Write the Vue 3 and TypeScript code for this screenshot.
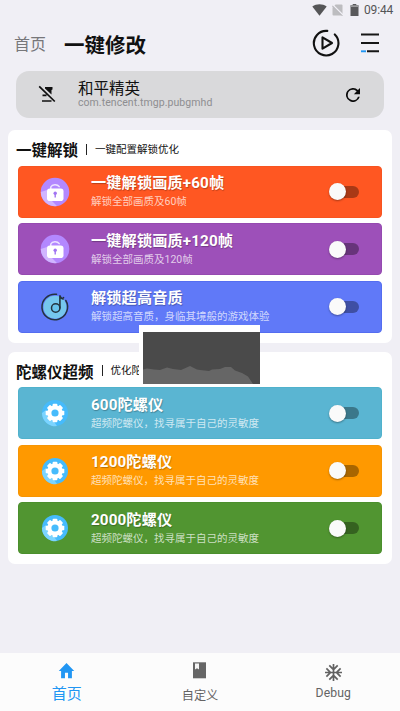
<script setup lang="ts">
import { ref } from 'vue'

type IconName = 'lock' | 'music' | 'gear'
interface Item { title: string; note: string; color: string; edge: string; icon: IconName; on: boolean }
interface Section { title: string; note: string; items: Item[] }

const gyroNote = '超频陀螺仪，找寻属于自己的灵敏度'

const sections = ref<Section[]>([
  {
    title: '一键解锁',
    note: '一键配置解锁优化',
    items: [
      { title: '一键解锁画质+60帧', note: '解锁全部画质及60帧', color: '#ff5722', edge: '#f75420', icon: 'lock', on: false },
      { title: '一键解锁画质+120帧', note: '解锁全部画质及120帧', color: '#9d50b9', edge: '#954ab0', icon: 'lock', on: false },
      { title: '解锁超高音质', note: '解锁超高音质，身临其境般的游戏体验', color: '#6079f8', edge: '#546df0', icon: 'music', on: false },
    ],
  },
  {
    title: '陀螺仪超频',
    note: '优化陀螺仪灵敏度',
    items: [
      { title: '600陀螺仪', note: gyroNote, color: '#5ab5d2', edge: '#50b2cc', icon: 'gear', on: false },
      { title: '1200陀螺仪', note: gyroNote, color: '#ff9900', edge: '#f69504', icon: 'gear', on: false },
      { title: '2000陀螺仪', note: gyroNote, color: '#519531', edge: '#4b8f2d', icon: 'gear', on: false },
    ],
  },
])

const gearTeeth = [0, 45, 90, 135, 180, 225, 270, 315]
</script>

<template>
  <div class="screen">
    <div class="status">
      <svg width="15" height="12" viewBox="0 0 15 12"><path d="M0.3 2.5C4.5-.4 10.500-.4 14.700 2.500L7.500 11.700Z" fill="#555557" /></svg>
      <svg class="sim" width="11" height="12" viewBox="0 0 11 12"><path d="M3.600.5H9.500Q10.500.5 10.500 1.500V11.500H1.500Q.5 11.500.5 10.500V3.500Z" fill="#bdbdc0" /><path d="M0 .5L11 11.500" stroke="#f0eff5" stroke-width="2" /><path d="M.2 1.700L10.200 11.700" stroke="#9a9a9c" stroke-width=".9" /></svg>
      <svg class="battery" width="9" height="12" viewBox="0 0 9 12"><path d="M2.700 0H6.300V1.300H8.500V12H.5V1.300H2.700Z" fill="#59595b" /><path d="M.5 1.300H8.500V3H.5Z" fill="#9b9b9d" /></svg>
      <span class="clock">09:44</span>
    </div>

    <header class="header">
      <span class="crumb">首页</span>
      <h1>一键修改</h1>
      <svg class="play" width="28" height="28" viewBox="0 0 28 28" fill="none" stroke="#111" stroke-width="2.100" stroke-linecap="round" stroke-linejoin="round">
        <path d="M15.300 1.900A12.300 12.300 0 1 0 22.800 5.400" />
        <path d="M10.500 8.300V19.700L20 14Z" />
      </svg>
      <svg width="20" height="20" viewBox="0 0 20 20" fill="none" stroke-width="1.900">
        <path d="M1 1.500H19M1 10H19M7 18.300H19" stroke="#161616" />
        <path d="M1 18.300H6" stroke="#2196f3" />
      </svg>
    </header>

    <section class="target">
      <svg class="nopin" width="18" height="18" viewBox="0 0 18 18">
        <path d="M7 2H14.500V4.500L13.500 5V9.500L7 3.500Z" fill="#101010" />
        <path d="M1.200 1.300L16.800 16.500M4 16H13.500M4.500 10.300H8.500" stroke="#101010" stroke-width="1.700" fill="none" />
      </svg>
      <div class="app">
        <div class="app-name">和平精英</div>
        <div class="app-id">com.tencent.tmgp.pubgmhd</div>
      </div>
      <svg class="reload" width="14" height="14" viewBox="4 4 16 16"><path d="M17.650 6.350A8 8 0 1 0 19.730 14H17.650A6 6 0 1 1 12 6C13.660 6 15.140 6.690 16.220 7.780L13 11H20V4Z" fill="#0c0c0c" /></svg>
    </section>

    <section v-for="section in sections" :key="section.title" class="card">
      <div class="card-head">
        <h2>{{ section.title }}</h2><i class="bar"></i><span>{{ section.note }}</span>
      </div>
      <div class="rows">
        <div v-for="item in section.items" :key="item.title" class="row" :style="{ background: item.color, borderColor: item.edge }">
          <svg v-if="item.icon === 'lock'" class="icon" viewBox="0 0 30 30">
            <circle cx="15" cy="15" r="14.300" fill="#b388ff" />
            <path d="M.8 15A14.300 14.300 0 0 0 17 29L7 19V13Z" fill="#d0b5ff" />
            <path d="M10.800 12V10A4.600 3.500 0 0 1 19.200 9.700" fill="none" stroke="#eee5ff" stroke-width="1.500" stroke-linecap="round" />
            <rect x="7" y="11.500" width="16.500" height="12.500" rx="2.800" fill="#fff" />
            <circle cx="15.200" cy="16.200" r="1.700" fill="#a174f2" /><path d="M14.500 17H15.900V20.500H14.500Z" fill="#a174f2" />
          </svg>
          <svg v-else-if="item.icon === 'music'" class="icon" viewBox="0 0 30 30">
            <circle cx="15" cy="15.200" r="11.500" fill="#75c7ed" />
            <path d="M16.500 2.300A12.800 12.800 0 1 0 25.800 8.500M23.300 5.500L23.600 5.800" fill="none" stroke="#24343f" stroke-width="1.500" stroke-linecap="round" />
            <circle cx="15.700" cy="16" r="4.200" fill="#69c4ed" stroke="#24343f" stroke-width="1.500" />
            <path d="M19.900 16V3.300Q20.500 6.500 23 7" fill="none" stroke="#24343f" stroke-width="1.600" stroke-linecap="round" />
          </svg>
          <svg v-else class="icon" viewBox="0 0 30 30">
            <circle cx="15" cy="15" r="13" fill="#46bbfc" />
            <path d="M2 15A13 13 0 0 0 17 28L6 12Z" fill="#7bd4ff" />
            <g fill="#fff">
              <circle cx="15" cy="15" r="7.700" />
              <rect v-for="angle in gearTeeth" :key="angle" x="12.700" y="5.700" width="4.600" height="4" rx=".8" :transform="`rotate(${angle} 15 15)`" />
            </g>
            <circle cx="15" cy="15" r="3.600" fill="#46bbfc" />
          </svg>
          <div class="label">
            <div class="title">{{ item.title }}</div>
            <div class="note">{{ item.note }}</div>
          </div>
          <button class="switch" :class="{ on: item.on }" :aria-pressed="item.on" @click="item.on = !item.on"></button>
        </div>
      </div>
    </section>

    <nav class="tabs">
      <div class="tab active">
        <svg width="17" height="17" viewBox="1 2 22 20" preserveAspectRatio="none"><path d="M10 20V14H14V20H19V12H22L12 3 2 12H5V20Z" fill="#2196f3" /></svg>
        <span>首页</span>
      </div>
      <div class="tab">
        <svg width="17" height="18" viewBox="0 0 17 18"><path d="M2 .3H15V16.300H2Z" fill="#666" /><path d="M4 1.500H8V7.500L6 6.200 4 7.500Z" fill="#f5f5f5" /></svg>
        <span>自定义</span>
      </div>
      <div class="tab">
        <svg class="flake" width="17" height="17" viewBox="2 2 20 20"><path d="M22 11H17.830L21.070 7.760 19.660 6.340 15 11H13V9L17.660 4.340 16.240 2.930 13 6.170V2H11V6.170L7.760 2.930 6.340 4.340 11 9V11H9L4.340 6.340 2.930 7.760 6.170 11H2V13H6.170L2.930 16.240 4.340 17.660 9 13H11V15L6.340 19.660 7.760 21.070 11 17.830V22H13V17.830L16.240 21.070 17.660 19.660 13 15V13H15L19.660 17.660 21.070 16.240 17.830 13H22Z" fill="#626262" /></svg>
        <span class="latin">Debug</span>
      </div>
    </nav>

    <svg class="monitor" width="121" height="59" viewBox="0 0 121 59">
      <path d="M0 0H121V59H0Z" fill="#fff" />
      <path d="M4 7H121V59H4Z" fill="#4a4a4a" />
      <path d="M4 44.500L8 43.500 15 44.500 21 45 28 42.500 34 44 42 45 51 41 58 44.500 61 45 70 46 73 44.500 81 44 86 42 92 42 96 45.500 103 48 109 51.500 112 56 114 59H4Z" fill="#666" />
    </svg>
  </div>
</template>

<style>
body { margin: 0; background: #f0eff5; }
</style>

<style scoped>
.screen {
  position: relative;
  display: flex;
  flex-direction: column;
  width: 400px;
  height: 711px;
  overflow: hidden;
  background: #f0eff5;
  font-family: Roboto, "Noto Sans CJK SC", sans-serif;
  color: #111;
}
.status {
  display: flex;
  align-items: center;
  justify-content: flex-end;
  height: 20px;
  padding-right: 7px;
  flex: none;
}
.sim { margin-left: 5px; }
.battery { margin-left: 7px; }
.clock { width: 29px; margin-left: 5px; font-size: 12px; line-height: 21px; color: #555557; letter-spacing: -.15px; white-space: nowrap; }
.header {
  display: flex;
  align-items: center;
  flex: none;
  height: 46px;
  padding: 0 20px 0 14px;
  margin-bottom: 5px;
}
.crumb { margin-top: 4px; font-size: 16px; line-height: 20px; color: #77777a; width: 50px; }
h1 { margin: 5px 0 0; font-size: 20.500px; line-height: 24px; font-weight: 700; }
.play { margin-left: auto; margin-right: 20px; }
.target {
  display: flex;
  align-items: center;
  flex: none;
  box-sizing: border-box;
  height: 47px;
  margin: 0 16px 12px;
  padding: 0 24px 0 22px;
  border-radius: 13px;
  background: #d9d9db;
}
.nopin { margin-top: -1px; }
.app { margin-left: 22px; flex: 1; }
.app-name { font-size: 15.500px; line-height: 16px; }
.app-id { font-size: 10.500px; line-height: 12px; color: #8e8e91; letter-spacing: .06px; }
.card {
  flex: none;
  box-sizing: border-box;
  height: 212.500px;
  margin: 0 8px 9px;
  padding: 0 10px;
  border-radius: 7px;
  background: #fff;
}
.card-head { display: flex; align-items: center; height: 35.500px; margin-left: -2px; line-height: 20px; }
.card-head h2 { margin: 7px 0 0; font-size: 15.500px; line-height: 20px; font-weight: 700; }
.bar { width: 1px; height: 11px; margin: 3px 8px 0; background: #222; }
.card-head span { margin-top: 4px; font-size: 10.500px; white-space: nowrap; }
.rows { display: flex; flex-direction: column; gap: 5.500px; }
.row {
  display: flex;
  align-items: center;
  box-sizing: border-box;
  height: 52px;
  padding: 0 22px 0 21px;
  border: 1px solid;
  border-radius: 4px;
}
.icon { width: 30px; height: 30px; flex: none; }
.label { flex: 1; margin-left: 21px; padding-top: 1px; color: #fff; white-space: nowrap; }
.title { font-size: 15.200px; line-height: 19px; font-weight: 700; letter-spacing: .12px; text-shadow: .6px .8px 1px rgba(0, 0, 0, .28); }
.note { font-size: 10.500px; line-height: 17px; color: rgba(255, 255, 255, .72); }
.switch {
  position: relative;
  width: 29px;
  height: 12px;
  flex: none;
  padding: 0;
  border: 0;
  border-radius: 6px;
  background: rgba(0, 0, 0, .34);
}
.switch::after {
  content: "";
  position: absolute;
  top: -2.500px;
  left: -1.500px;
  width: 17px;
  height: 17px;
  border-radius: 50%;
  background: #fafafa;
  box-shadow: 0 1px 2px rgba(0, 0, 0, .35);
}
.switch.on::after { left: 13.500px; }
.tabs {
  display: flex;
  height: 58px;
  margin-top: auto;
  background: #fcfcfc;
  flex: none;
}
.tab {
  display: flex;
  flex: 1;
  flex-direction: column;
  align-items: center;
  padding-top: 9px;
  font-size: 12.200px;
  color: #646464;
}
.tab svg { flex: none; height: 18px; }
.tab .flake { margin-top: 2px; height: 17px; }
.tab span { margin-top: 7px; line-height: 18px; }
.tab.active { color: #2196f3; font-size: 15px; }
.tab.active span { margin-top: 5px; line-height: 18px; }
.tab .latin { letter-spacing: .15px; margin-top: 3px; }
.monitor { position: absolute; left: 139px; top: 325px; }
</style>
